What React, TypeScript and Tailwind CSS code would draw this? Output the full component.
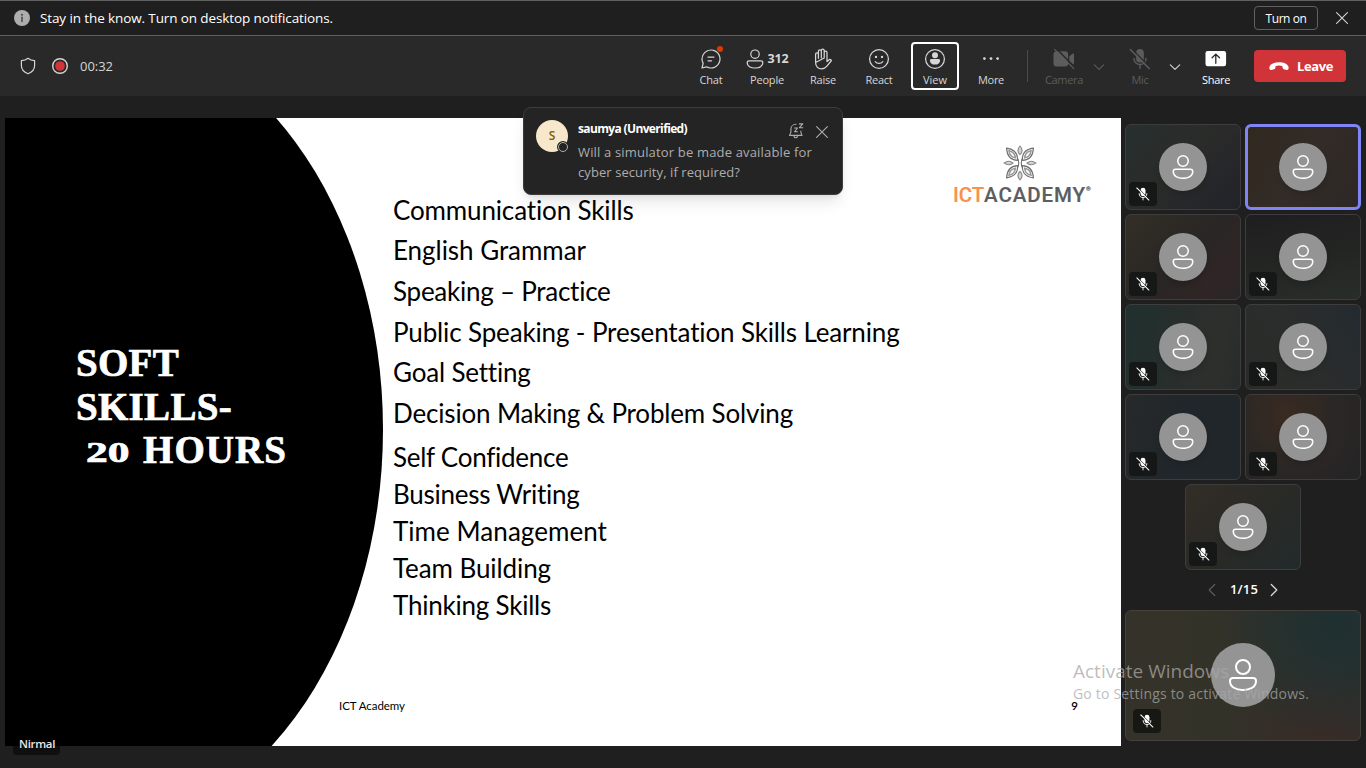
import { useLayoutEffect, useRef, type ReactNode } from "react";
import clsx from "clsx";

/* A single line of text whose tracking is adjusted so that it spans `w` pixels. */
function Line({ w, className, children }: { w: number; className?: string; children: string }) {
  const ref = useRef<HTMLSpanElement>(null);
  useLayoutEffect(() => {
    const el = ref.current;
    if (!el) return;
    el.style.letterSpacing = "0px";
    const natural = el.getBoundingClientRect().width;
    el.style.letterSpacing = `${(w - natural) / children.length}px`;
  }, [w, children]);
  return (
    <span ref={ref} className={clsx("inline-block shrink-0 whitespace-pre", className)}>
      {children}
    </span>
  );
}

const PERSON =
  "M10 2a4 4 0 100 8 4 4 0 000-8zM7 6a3 3 0 116 0 3 3 0 01-6 0zm-1.99 5A2 2 0 003 13c0 1.7.83 2.97 2.13 3.8A9.14 9.14 0 0010 18c1.85 0 3.58-.39 4.87-1.2A4.35 4.35 0 0017 13a2 2 0 00-2-2H5.01zM4 13a1 1 0 011-1h10a1 1 0 011 1c0 1.3-.62 2.28-1.67 2.95A8.16 8.16 0 0110 17a8.16 8.16 0 01-4.33-1.05A3.36 3.36 0 014 13z";
const CHAT =
  "M10 2a8 8 0 11-3.61 15.14l-.12-.07-3.65.92a.5.5 0 01-.62-.45v-.08l.01-.08.92-3.64-.07-.12a7.95 7.95 0 01-.83-2.9l-.02-.37L2 10a8 8 0 018-8zm0 1a7 7 0 00-6.1 10.42.5.5 0 01.06.28l-.02.1-.75 3.01 3.02-.75a.5.5 0 01.19-.01l.09.02.09.04A7 7 0 1010 3zm.5 8a.5.5 0 01.09.99h-3.09a.5.5 0 01-.09-.98h3.09zm2-3a.5.5 0 01.09.99h-5.09a.5.5 0 01-.09-.98l.09-.01h5z";

function PersonIcon({ className }: { className: string }) {
  return (
    <svg viewBox="0 0 20 20" className={className} fill="currentColor">
      <path d={PERSON} />
    </svg>
  );
}

function Stroke({ className, children }: { className?: string; children: ReactNode }) {
  return (
    <svg
      viewBox="0 0 24 24"
      className={clsx("size-6", className)}
      fill="none"
      stroke="currentColor"
      strokeWidth="1.25"
      strokeLinecap="round"
      strokeLinejoin="round"
    >
      {children}
    </svg>
  );
}

function Close({ className }: { className: string }) {
  return (
    <svg viewBox="0 0 12 12" className={className} fill="none" stroke="currentColor" strokeWidth="1.1" strokeLinecap="round">
      <path d="M.6.6l10.8 10.8M11.4.6L.6 11.4" />
    </svg>
  );
}

function MicOff({ className, gap }: { className: string; gap: string }) {
  return (
    <svg viewBox="0 0 20 20" className={className} fill="none" stroke="currentColor" strokeLinecap="round">
      <rect x="6.500" y="1" width="7" height="12.200" rx="3.500" fill="currentColor" stroke="none" />
      <path d="M4.500 9.500a5.500 5.500 0 0011 0M10 15.200V18.500" strokeWidth="1.300" />
      <path d="M2.300.700l17.200 17.200" strokeWidth="1.200" stroke={gap} />
      <path d="M1.200 1.400l17.200 17.200" strokeWidth="1.500" />
    </svg>
  );
}

function Tool({ label, w, active, children }: { label: string; w: number; active?: boolean; children: ReactNode }) {
  return (
    <button
      className={clsx(
        "flex h-12 w-12 shrink-0 flex-col items-center rounded border-2 pt-[3px]",
        active ? "border-white" : "border-transparent",
      )}
    >
      <div className="flex h-6 items-center justify-center">{children}</div>
      <Line w={w} className="mt-0.5 text-[11px] leading-[14px]">
        {label}
      </Line>
    </button>
  );
}

function Toolbar() {
  return (
    <div className="flex h-15 shrink-0 items-center bg-[#292929] text-[#d6d6d6]">
      <svg viewBox="0 0 16 18" className="ml-5 h-[18px] w-4" fill="none" stroke="currentColor" strokeWidth="1.2" strokeLinejoin="round">
        <path d="M8 1.3C9.8 2.8 12 3.6 14.6 3.7V8.6c0 4-2.3 6.6-6.6 8.1C3.700 15.200 1.400 12.600 1.400 8.600V3.700C4 3.600 6.200 2.800 8 1.300z" />
      </svg>
      <svg viewBox="0 0 18 18" className="ml-[15px] size-[18px]">
        <circle cx="9" cy="9" r="7.3" fill="none" stroke="#d6d6d6" strokeWidth="1.4" />
        <circle cx="9" cy="9" r="4.8" fill="#d13438" />
      </svg>
      <Line w={33} className="ml-[11px] text-[13px] leading-4 text-[#d6d6d6]">
        00:32
      </Line>
      <div className="ml-auto flex gap-2">
        <Tool label="Chat" w={23}>
          <div className="relative size-6">
            <svg viewBox="0 0 20 20" className="size-6" fill="currentColor">
              <path d={CHAT} />
            </svg>
            <div className="absolute -top-px left-[18px] size-1.5 rounded-full bg-[#da3b01]" />
          </div>
        </Tool>
        <Tool label="People" w={34}>
          <div className="-ml-0.5 flex items-center">
            <PersonIcon className="-ml-px size-6" />
            <Line w={21} className="ml-px text-[12.500px] font-bold">
              312
            </Line>
          </div>
        </Tool>
        <Tool label="Raise" w={26}>
          <Stroke>
            <path d="M4.600 15.500V7.200a1.400 1.400 0 012.800 0V11.300M7.400 11V4.300a1.450 1.450 0 012.900 0V10.800M10.300 10.500V3.600a1.450 1.450 0 012.900 0V10.800M13.200 11V5.400a1.400 1.400 0 012.800 0V14.600L17.500 13.200c.8-.8 1.900-.9 2.600-.2.300.3.300.7 0 1L15.900 19.200C14.500 21 13 21.800 10.600 21.800 7 21.800 4.600 19.300 4.600 15.500z" />
          </Stroke>
        </Tool>
        <Tool label="React" w={27}>
          <Stroke>
            <circle cx="12" cy="12" r="9.400" />
            <path d="M8.200 14.700c2 2.300 5.600 2.300 7.600 0" />
            <g fill="currentColor" stroke="none">
              <circle cx="9" cy="9.900" r="1.200" />
              <circle cx="15" cy="9.900" r="1.200" />
            </g>
          </Stroke>
        </Tool>
        <Tool label="View" w={24} active>
          <Stroke>
            <circle cx="12" cy="12" r="9.400" />
            <g fill="currentColor" stroke="none">
              <circle cx="12" cy="8.200" r="3" />
              <path d="M8.400 11.900h7.200c.9 0 1.500.6 1.500 1.500 0 2.400-2 4.200-5.100 4.200s-5.100-1.800-5.100-4.200c0-.9.600-1.500 1.500-1.500z" />
            </g>
          </Stroke>
        </Tool>
        <Tool label="More" w={26}>
          <svg viewBox="0 0 24 24" className="size-6" fill="currentColor">
            <circle cx="5.400" cy="11.600" r="1.400" />
            <circle cx="12" cy="11.600" r="1.400" />
            <circle cx="18.600" cy="11.600" r="1.400" />
          </svg>
        </Tool>
      </div>
      <div className="ml-3 h-8 w-px bg-[#4a4a4a]" />
      <div className="ml-3 flex items-center text-[#5c5c5c]">
        <Tool label="Camera" w={38}>
          <svg viewBox="0 0 24 24" className="size-6" fill="currentColor">
            <rect x="1.500" y="4.300" width="14.600" height="15.200" rx="3" />
            <path d="M17.300 9.300l3.600-2.700c.5-.4 1.100 0 1.100.5v9.600c0 .6-.6.900-1.100.5l-3.600-2.700z" />
            <path d="M3.900 1.300l19.200 19.200" stroke="#292929" strokeWidth="1.500" />
            <path d="M2.600 2.400l19.200 19.200" stroke="currentColor" strokeWidth="1.300" strokeLinecap="round" />
          </svg>
        </Tool>
        <svg viewBox="0 0 12 8" className="mt-0.5 ml-[5px] h-2 w-3" fill="none" stroke="currentColor" strokeWidth="1.100" strokeLinecap="round" strokeLinejoin="round">
          <path d="M1.300 1.800L6 6.300l4.700-4.500" />
        </svg>
      </div>
      <div className="ml-[11px] flex items-center text-[#5c5c5c]">
        <Tool label="Mic" w={17}>
          <MicOff className="size-[22px]" gap="#292929" />
        </Tool>
        <svg viewBox="0 0 12 8" className="mt-0.5 ml-[5px] h-2 w-3 text-[#d6d6d6]" fill="none" stroke="currentColor" strokeWidth="1.100" strokeLinecap="round" strokeLinejoin="round">
          <path d="M1.300 1.800L6 6.300l4.700-4.500" />
        </svg>
      </div>
      <div className="ml-[11px] text-white">
        <Tool label="Share" w={28}>
          <svg viewBox="0 0 24 24" className="size-6">
            <rect x="1.500" y="4" width="20.600" height="15.200" rx="2.200" fill="#fff" />
            <path d="M11.800 16.300V7.300M8.100 10.800L11.800 7.100l3.700 3.700" fill="none" stroke="#292929" strokeWidth="1.300" strokeLinecap="round" strokeLinejoin="round" />
          </svg>
        </Tool>
      </div>
      <button className="mr-5 ml-[14px] flex h-8 w-[92px] items-center rounded bg-[#d13438] pl-[15px] text-white">
        <svg viewBox="0 0 20 9" className="h-[9px] w-5" fill="currentColor">
          <path d="M10 .2C14.500.200 18 1.600 19.200 4 19.800 5.200 19.700 6.300 19.300 7.300 19 8 18.400 8.200 17.700 8L14.900 7.300C14.200 7.100 13.800 6.600 13.700 6L13.300 3.900C11.300 3.200 8.700 3.200 6.700 3.900L6.300 6C6.200 6.600 5.800 7.100 5.100 7.300L2.300 8C1.600 8.200 1 8 .7 7.300.3 6.300.2 5.200.8 4 2 1.600 5.500.2 10 .2z" />
        </svg>
        <Line w={36} className="mt-px ml-2 text-[13px] font-bold">
          Leave
        </Line>
      </button>
    </div>
  );
}

function NotificationBar() {
  return (
    <div className="flex h-9 shrink-0 items-center border-y border-[#616161] bg-[#1f1f1f] text-white">
      <svg viewBox="0 0 16 16" className="ml-3.5 size-4">
        <circle cx="8" cy="8" r="8" fill="#adadad" />
        <circle cx="8" cy="4.800" r=".95" fill="#3a3a3a" />
        <path d="M8 7.200v4.300" stroke="#3a3a3a" strokeWidth="1.300" strokeLinecap="round" />
      </svg>
      <Line w={293} className="ml-2.5 text-[13.500px] leading-5">
        Stay in the know. Turn on desktop notifications.
      </Line>
      <button className="ml-auto flex h-6 w-16 items-center justify-center rounded border border-[#616161] pt-px">
        <Line w={41} className="text-[12px]">
          Turn on
        </Line>
      </button>
      <Close className="mr-[18px] ml-[18px] size-3 text-[#d6d6d6]" />
    </div>
  );
}

function LogoMark() {
  return (
    <svg viewBox="-18 -18 36 36" className="size-9" fill="none" stroke="#6f6f6f" strokeWidth="1.1">
      {[42, 138, 222, 318].map((a) => (
        <g key={a} transform={`rotate(${a})`}>
          <path d="M0-3.500C5-8.500 4.600-14.500 0-20-4.600-14.500-5-8.500 0-3.500z" />
          <path d="M0-7C2.400-10 2.200-13.500 0-16.500-2.200-13.500-2.400-10 0-7z" strokeWidth="1.600" stroke="#9a9a9a" />
        </g>
      ))}
      <path
        d="M0-8.500c2.800-2.600 2.800-5.400 0-8.500-2.800 3.100-2.800 5.900 0 8.500zM0 8.500c2.800 2.600 2.800 5.400 0 8.500-2.800-3.100-2.800-5.900 0-8.500zM7 0c3-2.400 5.600-2.400 8.800 0-3.200 2.400-5.800 2.400-8.800 0zM-7 0c-3-2.400-5.600-2.400-8.800 0 3.200 2.400 5.800 2.400 8.800 0z"
        fill="#d4d4d4"
        stroke="#8a8a8a"
      />
      <path d="M-2.600-5C-1-2-1 2-2.600 5M2.600-5C1-2 1 2 2.600 5" />
    </svg>
  );
}

const TOPICS: [string, number][] = [
  ["Communication Skills", 241],
  ["English Grammar", 193],
  ["Speaking – Practice", 218],
  ["Public Speaking - Presentation Skills Learning", 507],
  ["Goal Setting", 137],
  ["Decision Making & Problem Solving", 400],
];
const MORE_TOPICS: [string, number][] = [
  ["Self Confidence", 175],
  ["Business Writing", 187],
  ["Time Management", 214],
  ["Team Building", 158],
  ["Thinking Skills", 158],
];

function Slide() {
  return (
    <div className="relative mt-[22px] ml-[5px] flex h-[628px] w-[1116px] shrink-0 overflow-hidden bg-white">
      <svg viewBox="0 0 1116 628" className="absolute inset-0 h-full w-full">
        <ellipse cx="78" cy="311.500" rx="300" ry="407" fill="#000" />
      </svg>
      <div className="relative w-[388px] shrink-0 pt-[223px] pl-[71px] font-['Liberation_Serif'] text-[39px] leading-[43.700px] font-bold text-white [-webkit-text-stroke:0.700px_white]">
        <div>
          <Line w={103}>SOFT</Line>
        </div>
        <div>
          <Line w={156}>SKILLS-</Line>
        </div>
        <div className="flex pl-2.5">
          <span className="inline-block w-[57px] origin-left translate-y-[2.500px] scale-x-150 text-[29px]">20</span>
          <Line w={144}>HOURS</Line>
        </div>
      </div>
      <div className="relative flex flex-col pt-[72px] font-['Lato'] text-[26px] text-black">
        {TOPICS.map(([t, w]) => (
          <div key={t} className="flex h-[40.600px] items-center">
            <Line w={w}>{t}</Line>
          </div>
        ))}
        <div className="mt-[5px]">
          {MORE_TOPICS.map(([t, w]) => (
            <div key={t} className="flex h-[37.100px] items-center">
              <Line w={w}>{t}</Line>
            </div>
          ))}
        </div>
      </div>
      <div className="absolute top-[27px] left-[948px] flex flex-col">
        <div className="ml-[49px]">
          <LogoMark />
        </div>
        <div className="mt-0.5 flex font-['Roboto'] text-[20.500px] leading-6 font-medium text-[#5c5d60] [-webkit-text-stroke:0.200px]">
          <Line w={31} className="text-[#f7924a]">
            ICT
          </Line>
          <Line w={102}>ACADEMY</Line>
          <span className="text-[6px] leading-3 font-normal">®</span>
        </div>
      </div>
      <div className="absolute right-0 bottom-[30px] left-[334px] flex justify-between pr-[43px] font-['Lato'] text-[11.500px] leading-5 text-black">
        <Line w={66}>ICT Academy</Line>
        <span className="font-semibold">9</span>
      </div>
    </div>
  );
}

function Tile({ glow, speaking, muted = true }: { glow: string; speaking?: boolean; muted?: boolean }) {
  return (
    <div
      className={clsx(
        "relative flex h-[86px] w-[116px] items-center justify-center rounded-md",
        speaking ? "border-3 border-[#7f85f5]" : "border border-[#3d3d3d]",
        glow,
      )}
    >
      <div className="flex size-12 items-center justify-center rounded-full bg-[#949494] text-white shadow-md">
        <PersonIcon className="size-[30px]" />
      </div>
      {muted && (
        <div className="absolute bottom-[3px] left-[3px] flex h-6 w-7 items-center justify-center rounded bg-[#161817] text-white">
          <MicOff className="size-3.5" gap="#161817" />
        </div>
      )}
    </div>
  );
}

function Participants() {
  return (
    <div className="mt-7 ml-1 flex w-[236px] flex-col items-center">
      <div className="grid grid-cols-2 gap-1">
        <Tile glow="bg-linear-135 from-[#26302f] via-[#2a2b29] to-[#22222b]" />
        <Tile speaking muted={false} glow="bg-[linear-gradient(120deg,#30291f_0%,#332b27_50%,#2c2826_100%)]" />
        <Tile glow="bg-[linear-gradient(135deg,#332f26_0%,#292625_50%,#302526_80%,#272626_100%)]" />
        <Tile glow="bg-[linear-gradient(170deg,#1e1e1e_0%,#232523_50%,#292d2a_100%)]" />
        <Tile glow="bg-[linear-gradient(100deg,#1f302e_0%,#292e2c_50%,#2e2f2d_80%,#262c2b_100%)]" />
        <Tile glow="bg-[linear-gradient(60deg,#2a2b29_0%,#2b2d2c_50%,#232a30_100%)]" />
        <Tile glow="bg-[linear-gradient(100deg,#27292a_0%,#20262b_50%,#20262a_100%)]" />
        <Tile glow="bg-[radial-gradient(circle_at_35%_25%,#392b21_0%,#2b2725_50%,#242425_100%)]" />
      </div>
      <div className="mt-1">
        <Tile glow="bg-[linear-gradient(135deg,#332d26_0%,#2a2a26_50%,#232a2c_100%)]" />
      </div>
      <div className="flex h-10 w-full items-center justify-center">
        <svg viewBox="0 0 8 14" className="h-3.5 w-2" fill="none" stroke="#5c5c5c" strokeWidth="1.200" strokeLinecap="round" strokeLinejoin="round">
          <path d="M6.700 1.500L1.200 7l5.500 5.500" />
        </svg>
        <Line w={28} className="mr-3 ml-3.5 text-[13px] font-semibold text-white">
          1/15
        </Line>
        <svg viewBox="0 0 8 14" className="h-3.5 w-2" fill="none" stroke="#d6d6d6" strokeWidth="1.300" strokeLinecap="round" strokeLinejoin="round">
          <path d="M1.300 1.500L6.800 7l-5.500 5.500" />
        </svg>
      </div>
      <div className="relative flex h-[131px] w-[236px] items-center justify-center rounded-md border border-[#44403a] bg-[radial-gradient(circle_at_90%_10%,#1f3032_0%,transparent_50%),radial-gradient(circle_at_85%_100%,#3a2b26_0%,transparent_40%),linear-gradient(90deg,#35322a_0%,#333228_40%,#2c2f2c_100%)] pb-px">
        <div className="flex size-16 items-center justify-center rounded-full bg-[#949494] text-white">
          <PersonIcon className="size-10" />
        </div>
        <div className="absolute bottom-[7px] left-[7px] flex h-6 w-7 items-center justify-center rounded bg-[#171714] text-white">
          <MicOff className="size-3.5" gap="#171714" />
        </div>
      </div>
    </div>
  );
}

function Toast() {
  return (
    <div className="absolute top-[107px] left-[523px] flex h-[88px] w-80 rounded-lg border border-[#3d3d3d] bg-[#242424] pt-3 pl-3 shadow-lg">
      <div className="relative flex size-8 shrink-0 items-center justify-center rounded-full bg-[#f7e8cc] text-[12px] font-semibold text-[#835b00]">
        S
        <div className="absolute -right-px -bottom-px size-3 rounded-full bg-[#242424] p-px">
          <div className="size-full rounded-full border border-[#adadad]" />
        </div>
      </div>
      <div className="ml-2.5 flex flex-col items-start">
        <Line w={109} className="text-[12px] leading-[18px] font-bold text-white">
          saumya (Unverified)
        </Line>
        <div className="mt-1 flex flex-col items-start text-[13px] leading-5 text-[#adadad]">
          <Line w={234}>Will a simulator be made available for</Line>
          <Line w={162}>cyber security, if required?</Line>
        </div>
      </div>
      <svg
        viewBox="0 0 16 16"
        className="absolute top-[15px] left-[264px] size-4 text-[#adadad]"
        fill="none"
        stroke="currentColor"
        strokeWidth="1.1"
        strokeLinecap="round"
        strokeLinejoin="round"
      >
        <path d="M8 1.300C4.900 1.300 2.900 3.600 2.900 6.300V9.200L1.500 12.400h12.500L12.900 9.600V8M5.800 12.600c.2 1.500 1 2.200 1.900 2.200s1.700-.7 1.900-2.200" />
        <path d="M6.500 5h3L6.500 8.800h3M11.400.9h3.400l-3.400 3.800h3.400" />
      </svg>
      <Close className="absolute top-[18px] left-[292px] size-3 text-[#adadad]" />
    </div>
  );
}

export default function App() {
  return (
    <div className="relative flex h-[768px] w-[1366px] flex-col overflow-hidden bg-[#1f1f1f] font-['Open_Sans',sans-serif]">
      <NotificationBar />
      <Toolbar />
      <div className="flex min-h-0 flex-1">
        <Slide />
        <Participants />
      </div>
      <div className="absolute top-[733px] left-[13px] flex h-[22px] w-[47px] items-center rounded bg-black/50 pl-1.5 text-[#e8e8e8]">
        <Line w={36} className="text-[11.500px] font-semibold">
          Nirmal
        </Line>
      </div>
      <Toast />
      <div className="pointer-events-none absolute top-[657px] left-[1073px] flex flex-col items-start text-[#a8a8a8]/75">
        <Line w={156} className="text-[19px] leading-7">
          Activate Windows
        </Line>
        <Line w={236} className="text-[14px] leading-[18px]">
          Go to Settings to activate Windows.
        </Line>
      </div>
    </div>
  );
}
